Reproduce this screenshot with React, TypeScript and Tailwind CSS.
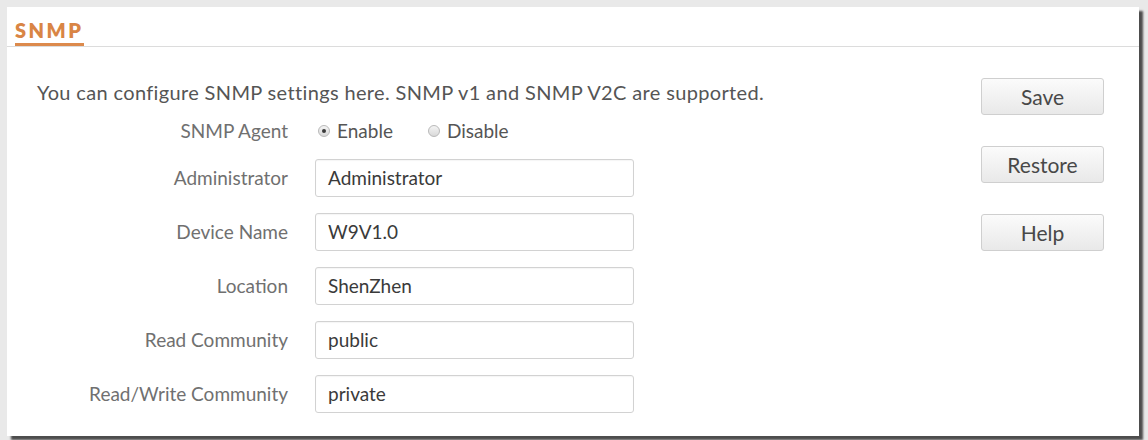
import React from "react";

const font = { fontFamily: 'Lato, "Open Sans", sans-serif' };

function Radio({ checked, label }: { checked: boolean; label: string }) {
  return (
    <label className="flex items-center gap-[7px]">
      <span className="flex h-[12px] w-[12px] items-center justify-center rounded-full border border-[#b9b9b9] bg-gradient-to-b from-[#f4f4f4] to-[#d9d9d9]">
        {checked && <span className="h-[4px] w-[4px] rounded-full bg-[#3a3a3a]" />}
      </span>
      <span className="text-[#555]">{label}</span>
    </label>
  );
}

function Field({ label, value }: { label: string; value: string }) {
  return (
    <div className="flex items-center">
      <div className="w-[251px] text-right text-[#707070]">{label}</div>
      <div className="ml-[27px] flex h-[38px] w-[319px] items-center rounded-[3px] border border-[#d2d2d2] bg-white pl-[12px] text-[#3a3a3a] shadow-[inset_0_1px_1px_rgba(0,0,0,0.04)]">
        {value}
      </div>
    </div>
  );
}

function Btn({ children }: { children: React.ReactNode }) {
  return (
    <button className="flex h-[37px] w-[123px] items-center justify-center rounded-[3px] border border-[#cfcfcf] bg-gradient-to-b from-[#fbfbfb] to-[#e9e9e9] text-[21px] leading-none text-[#484848]">
      {children}
    </button>
  );
}

export default function App() {
  return (
    <div className="h-[440px] w-[1148px] overflow-hidden bg-[#e9e9e9] pl-[7px] pt-[7px]" style={font}>
      <div className="flex h-[429px] w-[1132px] flex-col bg-white shadow-[4px_4px_2px_#4d4d4d] text-[19px]">
        <div className="flex h-[40px] items-end border-b border-[#dcdcdc] px-[8px]">
          <div className="border-b-[3px] border-[#dc8a4c] pb-[2px] text-[20px] font-extrabold leading-[21px] tracking-[2.5px] text-[#d98545]">
            SNMP
          </div>
        </div>
        <div className="flex flex-1">
          <div className="flex-1 pl-[30px] pt-[34px]">
            <div className="text-[20px] leading-[22px] tracking-[0.35px] text-[#555]">
              You can configure SNMP settings here. SNMP v1 and SNMP V2C are supported.
            </div>
            <div className="mt-[16px] flex h-[24px] items-center">
              <div className="w-[251px] text-right text-[#707070]">SNMP Agent</div>
              <div className="ml-[30px] flex items-center gap-[35px]">
                <Radio checked label="Enable" />
                <Radio checked={false} label="Disable" />
              </div>
            </div>
            <div className="mt-[16px] flex flex-col gap-[16px]">
              <Field label="Administrator" value="Administrator" />
              <Field label="Device Name" value="W9V1.0" />
              <Field label="Location" value="ShenZhen" />
              <Field label="Read Community" value="public" />
              <Field label="Read/Write Community" value="private" />
            </div>
          </div>
          <div className="mr-[35px] flex flex-col gap-[31px] pt-[31px]">
            <Btn>Save</Btn>
            <Btn>Restore</Btn>
            <Btn>Help</Btn>
          </div>
        </div>
      </div>
    </div>
  );
}
